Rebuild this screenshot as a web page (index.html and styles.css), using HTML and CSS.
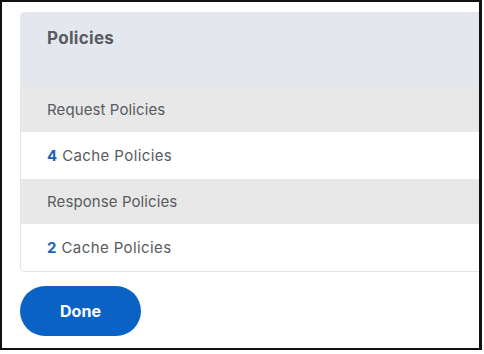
FILE: index.html
```html
<!DOCTYPE html>
<html lang="en">
<head>
    <meta charset="UTF-8">
    <title>Policies</title>
    <link rel="stylesheet" href="styles.css">
</head>
<body>
    <div class="frame">
        <div class="card">
            <div class="card-head">Policies</div>
            <div class="group-row">Request Policies</div>
            <div class="item-row"><span class="count">4</span> Cache Policies</div>
            <div class="group-row">Response Policies</div>
            <div class="item-row"><span class="count">2</span> Cache Policies</div>
        </div>
        <button class="done-btn">Done</button>
    </div>
</body>
</html>
```

FILE: styles.css
```css
body {
    margin: 0;
    background: #fff;
    font-family: Inter, "Noto Sans", sans-serif;
    color: #585b60;
}
.frame {
    box-sizing: border-box;
    width: 482px;
    height: 350px;
    border: 2px solid #111;
    border-right-width: 3px;
    padding: 10px 0 0 18px;
    overflow: hidden;
}
.card {
    width: 480px;
    border: 1px solid #e3e5e8;
    border-radius: 4px 0 0 4px;
    overflow: hidden;
}
.card-head {
    height: 74px;
    background: #e4e8ee;
    padding: 15px 0 0 26px;
    box-sizing: border-box;
    font-size: 17px;
    font-weight: 700;
    letter-spacing: 0.3px;
}
.group-row {
    height: 45px;
    background: #e8e8e8;
    padding-left: 26px;
    display: flex;
    align-items: center;
    font-size: 15px;
    letter-spacing: 0.1px;
}
.item-row {
    height: 47px;
    background: #fff;
    padding-left: 26px;
    display: flex;
    align-items: center;
    font-size: 15px;
    letter-spacing: 0.4px;
    white-space: pre;
}
.count {
    color: #1b62b8;
    font-weight: 700;
}
.done-btn {
    margin-top: 14px;
    width: 121px;
    height: 50px;
    border: none;
    border-radius: 25px;
    background: #0a63c4;
    color: #fff;
    font-family: inherit;
    font-size: 16px;
    font-weight: 700;
}
```
